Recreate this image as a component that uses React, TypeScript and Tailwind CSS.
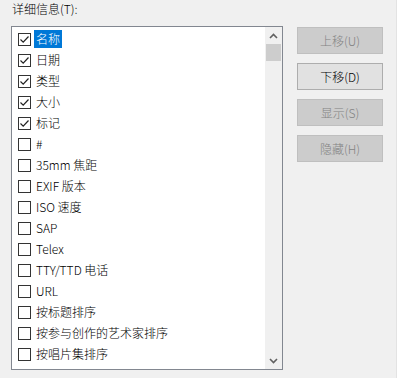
import React from 'react';

const items: { label: string; checked: boolean }[] = [
  { label: '名称', checked: true },
  { label: '日期', checked: true },
  { label: '类型', checked: true },
  { label: '大小', checked: true },
  { label: '标记', checked: true },
  { label: '#', checked: false },
  { label: '35mm 焦距', checked: false },
  { label: 'EXIF 版本', checked: false },
  { label: 'ISO 速度', checked: false },
  { label: 'SAP', checked: false },
  { label: 'Telex', checked: false },
  { label: 'TTY/TTD 电话', checked: false },
  { label: 'URL', checked: false },
  { label: '按标题排序', checked: false },
  { label: '按参与创作的艺术家排序', checked: false },
  { label: '按唱片集排序', checked: false },
];

const buttons = [
  { label: '上移(U)', enabled: false },
  { label: '下移(D)', enabled: true },
  { label: '显示(S)', enabled: false },
  { label: '隐藏(H)', enabled: false },
];

function CheckBox({ checked }: { checked: boolean }) {
  return (
    <div className="w-[13px] h-[13px] border border-[#333333] bg-white flex items-center justify-center shrink-0">
      {checked && (
        <svg width="11" height="11" viewBox="0 0 11 11">
          <path d="M1.5 5.5 L4.2 8.2 L9.5 2.5" fill="none" stroke="#222" strokeWidth="1.2" />
        </svg>
      )}
    </div>
  );
}

export default function App() {
  return (
    <div
      className="w-[397px] h-[378px] bg-[#f0f0f0] border-r border-[#e3e3e3] text-[12px] font-light text-black overflow-hidden"
      style={{ fontFamily: '"Noto Sans CJK SC", "Noto Sans", sans-serif' }}
    >
      <div className="h-[26px] pl-[12px] pt-[1px] leading-[16px]">详细信息(T):</div>
      <div className="flex">
        {/* list box */}
        <div className="ml-[11px] w-[272px] h-[344px] border border-[#828790] bg-white flex">
          <div className="flex-1 pt-[3px]">
            {items.map((it, i) => (
              <div key={i} className="h-[21px] flex items-start">
                <div className="h-[18px] flex items-center">
                  <div className="ml-[6px]">
                    <CheckBox checked={it.checked} />
                  </div>
                  <span
                    className={`ml-[3px] px-[2px] h-[18px] leading-[18px] whitespace-nowrap ${
                      i === 0 ? 'bg-[#0078d7] text-white' : ''
                    }`}
                  >
                    {it.label}
                  </span>
                </div>
              </div>
            ))}
          </div>
          {/* scrollbar */}
          <div className="w-[17px] bg-[#f0f0f0] flex flex-col">
            <div className="h-[17px] flex items-center justify-center">
              <svg width="9" height="6" viewBox="0 0 9 6">
                <path d="M1 5 L4.5 1.5 L8 5" fill="none" stroke="#606060" strokeWidth="1.6" />
              </svg>
            </div>
            <div className="h-[17px] mx-[1px] bg-[#cdcdcd]" />
            <div className="flex-1" />
            <div className="h-[17px] flex items-center justify-center">
              <svg width="9" height="6" viewBox="0 0 9 6">
                <path d="M1 1 L4.5 4.5 L8 1" fill="none" stroke="#606060" strokeWidth="1.6" />
              </svg>
            </div>
          </div>
        </div>
        {/* buttons */}
        <div className="ml-[14px] mt-[1px] flex flex-col gap-[9px]">
          {buttons.map((b) => (
            <div
              key={b.label}
              className={`w-[86px] h-[27px] border flex items-center justify-center ${
                b.enabled
                  ? 'bg-[#e1e1e1] border-[#adadad] text-black'
                  : 'bg-[#cccccc] border-[#bfbfbf] text-[#838383]'
              }`}
            >
              {b.label}
            </div>
          ))}
        </div>
      </div>
    </div>
  );
}
